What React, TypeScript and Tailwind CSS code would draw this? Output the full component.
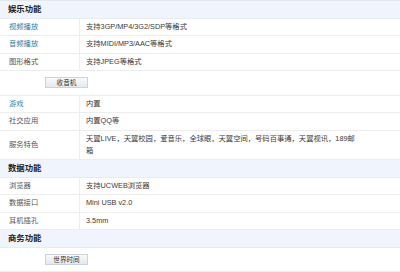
type Item =
  | { kind: 'row'; label: string; value: string; link?: boolean }
  | { kind: 'buttons'; buttons: string[] };

type Section = { title: string; items: Item[] };

const sections: Section[] = [
  {
    title: '娱乐功能',
    items: [
      { kind: 'row', label: '视频播放', value: '支持3GP/MP4/3G2/SDP等格式', link: true },
      { kind: 'row', label: '音频播放', value: '支持MIDI/MP3/AAC等格式', link: true },
      { kind: 'row', label: '图形格式', value: '支持JPEG等格式' },
      { kind: 'buttons', buttons: ['收音机'] },
      { kind: 'row', label: '游戏', value: '内置', link: true },
      { kind: 'row', label: '社交应用', value: '内置QQ等' },
      {
        kind: 'row',
        label: '服务特色',
        value: '天翼LIVE，天翼校园，爱音乐，全球眼，天翼空间，号码百事通，天翼视讯，189邮箱',
      },
    ],
  },
  {
    title: '数据功能',
    items: [
      { kind: 'row', label: '浏览器', value: '支持UCWEB浏览器' },
      { kind: 'row', label: '数据接口', value: 'Mini USB v2.0' },
      { kind: 'row', label: '耳机插孔', value: '3.5mm' },
    ],
  },
  {
    title: '商务功能',
    items: [{ kind: 'buttons', buttons: ['世界时间'] }],
  },
];

function SpecRow({ label, value, link }: { label: string; value: string; link?: boolean }) {
  return (
    <div className="grid grid-cols-[80px_1fr] border-b border-[#ededed]">
      <div
        className={`flex items-center border-r border-[#ededed] pl-[9px] ${
          link ? 'text-[#2f7fa2]' : 'text-[#555]'
        }`}
      >
        {label}
      </div>
      <div className="py-[2.25px] pl-[6px] pr-[40px] text-[#3a3a3a]">{value}</div>
    </div>
  );
}

function ButtonRow({ buttons }: { buttons: string[] }) {
  return (
    <div className="flex h-[24.5px] items-center gap-2 border-b border-[#ededed] pl-[45px]">
      {buttons.map((b) => (
        <button
          key={b}
          className="h-[11px] w-[43px] border border-[#cbd3dc] bg-gradient-to-b from-[#f8fafc] to-[#e4e9ef] text-[6.6px] leading-[9px] text-[#333]"
        >
          {b}
        </button>
      ))}
    </div>
  );
}

export default function App() {
  return (
    <div className="h-[272px] w-[400px] overflow-hidden bg-white font-['Liberation_Sans','Noto_Sans_CJK_SC',sans-serif] text-[7.3px] leading-[12px]">
      <div className="border-t border-[#e3e8ee]">
        {sections.map((s) => (
          <div key={s.title}>
            <div className="flex h-[17.5px] items-center border-b border-[#e8ecf1] bg-[#f0f5fd] pl-[8px] text-[8.4px] font-bold text-[#222]">
              {s.title}
            </div>
            {s.items.map((it, i) =>
              it.kind === 'row' ? (
                <SpecRow key={i} label={it.label} value={it.value} link={it.link} />
              ) : (
                <ButtonRow key={i} buttons={it.buttons} />
              ),
            )}
          </div>
        ))}
      </div>
    </div>
  );
}
